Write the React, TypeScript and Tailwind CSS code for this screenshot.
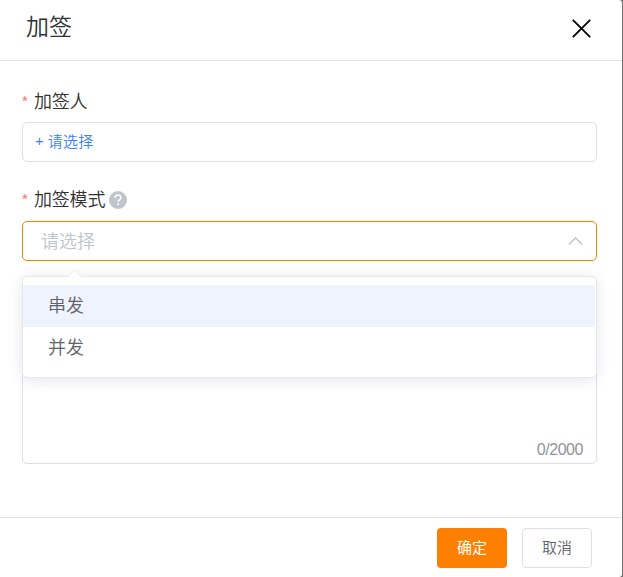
import { useState } from "react";

const modes = ["串发", "并发"];

function FieldLabel({ text, help }: { text: string; help?: boolean }) {
  return (
    <div className="flex h-[22px] items-center text-[18px] leading-[22px] text-[#303133]">
      <span className="mr-1.5 w-[6px] font-['Liberation_Sans',sans-serif] text-[15px] font-normal text-[#f5705c]">*</span>
      <span className="-mr-px pb-[3px] tracking-[-0.2px]">{text}</span>
      {help && (
        <svg className="mt-[2px] ml-[5px] h-[18px] w-[18px]" viewBox="0 0 18 18" fill="none">
          <circle cx="9" cy="9" r="9" fill="#c0c4cc" />
          <path d="M6.1 6.9C6.1 5 7.4 4 9 4s2.9 1 2.9 2.7c0 1.9-2.8 2.1-2.8 4.3" stroke="#fff" strokeWidth="1.5" />
          <circle cx="9.1" cy="13.2" r="1" fill="#fff" />
        </svg>
      )}
    </div>
  );
}

export default function App() {
  const [active, setActive] = useState(modes[0]);

  return (
    <div className="h-[577px] w-[623px] overflow-hidden bg-[#707070] pr-px font-['Noto_Sans_CJK_SC',sans-serif] font-[350]">
      <div className="flex h-full flex-col rounded-r-[3px] bg-white">
        {/* Header */}
        <header className="flex h-[61px] shrink-0 items-center justify-between border-b border-[#dcdfe6] pr-[31px] pb-[6px] pl-[26px]">
          <h1 className="pb-[4px] text-[23px] leading-[30px] text-[#303133]">加签</h1>
          <button aria-label="关闭" className="mt-[3px]">
            <svg className="h-[19px] w-[19px]" viewBox="0 0 19 19" stroke="#000" strokeWidth="1.8">
              <path d="M.8.8l17.4 17.4M18.2.8.8 18.2" />
            </svg>
          </button>
        </header>

        {/* Form */}
        <main className="flex-1 pt-[29px] pr-[25px] pl-[22px]">
          <FieldLabel text="加签人" />
          <div className="mt-[10px] flex h-10 items-center rounded-[5px] border border-[#dcdfe6] pb-[2px] pl-[12px] text-[15px] text-[#3e7fff]">
            <span className="mr-[4px] font-['Liberation_Sans',sans-serif] font-normal">+</span>
            <span className="tracking-[0.2px]">请选择</span>
          </div>

          <div className="mt-[26px]">
            <FieldLabel text="加签模式" help />
          </div>
          <div className="relative mt-[11px]">
            <div className="flex h-10 items-center justify-between rounded-[5px] border border-[#ff8000] pr-[13px] pl-[18px] text-[18px] text-[#c0c4cc]">
              <span className="pb-[2px]">请选择</span>
              <svg className="h-[8px] w-[15px]" viewBox="0 0 15 8" fill="none" stroke="#c0c4cc" strokeWidth="1.4">
                <path d="M.8 7.4 7.5.9l6.7 6.5" />
              </svg>
            </div>

            {/* Dropdown */}
            <div className="absolute top-[55px] left-0 z-10 h-[102px] w-full rounded-[5px] border border-[#e4e7ed] bg-white pt-2 pr-px shadow-[0_2px_15px_rgba(0,0,0,0.1)]">
              <svg className="absolute -top-[7px] left-[44px] h-[8px] w-[15px]" viewBox="0 0 15 8">
                <path d="M0 7.5 7.5.8 15 7.5V8H0Z" fill="#fff" />
                <path d="M0 7 7.5.6 15 7" fill="none" stroke="#ebeef5" />
              </svg>
              <ul>
                {modes.map((mode) => (
                  <li
                    key={mode}
                    onMouseEnter={() => setActive(mode)}
                    className={`flex h-[42px] items-center pb-[3px] pl-[25px] text-[18px] text-[#606266] ${active === mode ? "bg-[#eff3fd]" : ""}`}
                  >
                    {mode}
                  </li>
                ))}
              </ul>
            </div>
          </div>

          <div className="mt-[59px] flex h-[144px] items-end justify-end rounded-[5px] border border-[#dcdfe6] pr-[13px] pb-[3px] font-['Liberation_Sans',sans-serif] text-[16px] leading-[20px] font-normal tracking-[-0.45px] text-[#909399]">
            0/2000
          </div>
        </main>

        {/* Footer */}
        <footer className="flex h-[60px] shrink-0 items-start justify-end gap-[15px] border-t border-[#dcdfe6] pt-[10px] pr-[30px] text-[15px]">
          <button className="h-10 w-[70px] rounded-[4px] bg-[#ff8000] pb-[2px] font-normal text-white">确定</button>
          <button className="h-10 w-[70px] rounded-[4px] border border-[#dcdfe6] pb-[2px] text-[#606266]">取消</button>
        </footer>
      </div>
    </div>
  );
}
